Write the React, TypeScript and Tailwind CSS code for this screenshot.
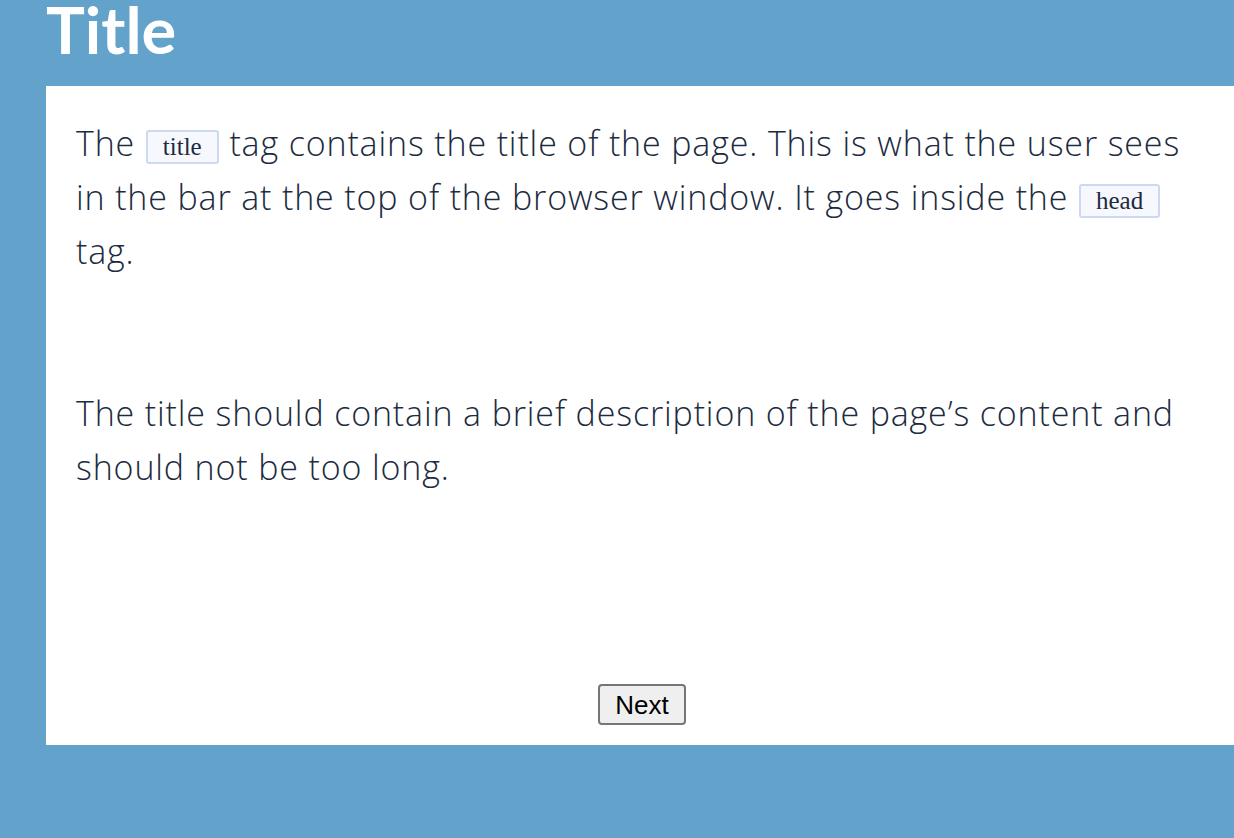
export default function App() {
  return (
    <div className="min-h-[838px] w-full overflow-hidden bg-[#62a2cb]">
      <div className="flex h-[86px] items-start pl-[46px]">
        <h1 className="font-['Lato',sans-serif] text-[65px] font-bold leading-[58px] text-white">
          Title
        </h1>
      </div>

      <div className="ml-[46px] flex h-[659px] w-[1192px] flex-col bg-white px-[30px] pt-[30px] font-['Open_Sans',sans-serif] text-[34px] font-light leading-[54px] tracking-[0.85px] text-[#1c2b3e]">
        <p>
          The <Code>title</Code> tag contains the title of the page. This is what the user sees in
          the bar at the top of the browser window. It goes inside the <Code>head</Code> tag.
        </p>

        <p className="mt-[108px]">
          The title should contain a brief description of the page’s content and should not be too
          long.
        </p>

        <div className="mt-auto mb-[20px] flex justify-center">
          <button className="h-[41px] w-[88px] rounded-[4px] border-2 border-[#767676] bg-[#efefef] font-['Liberation_Sans',sans-serif] text-[26px] leading-none font-normal tracking-normal text-black">
            Next
          </button>
        </div>
      </div>
    </div>
  );
}

function Code({ children }: { children: string }) {
  return (
    <code className="mx-[1px] inline-block rounded-[3px] border-2 border-[#cdd9f3] bg-[#f6f8fd] px-[15px] align-[1px] font-['Liberation_Serif',serif] text-[25px] leading-[30px] tracking-normal text-[#1c2b3e]">
      {children}
    </code>
  );
}
